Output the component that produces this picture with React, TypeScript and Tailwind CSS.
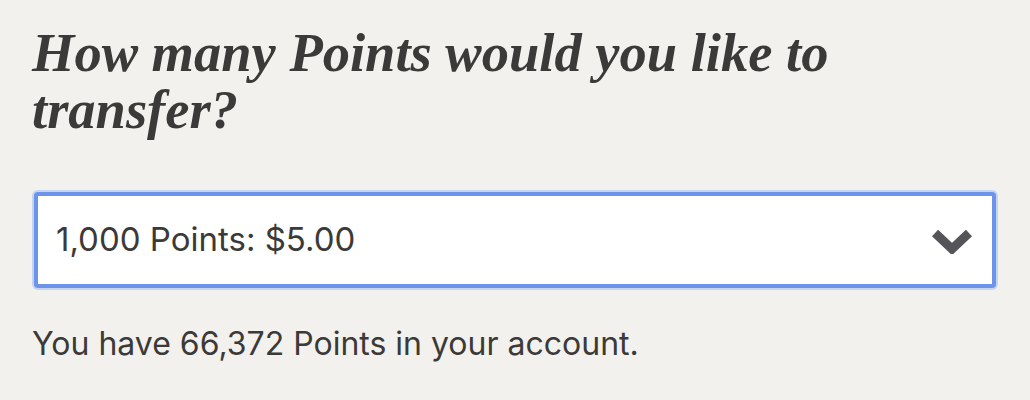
export default function App() {
  return (
    <div className="min-h-[400px] w-full bg-[#f3f1ed] px-[32px] pt-[24px] text-[#3b3a38]">
      <h1
        className="text-[54.5px] font-bold italic leading-[57px]"
        style={{ fontFamily: '"Liberation Serif", "DejaVu Serif", serif' }}
      >
        How many Points would you like to
        <br />
        transfer?
      </h1>
      <div className="mt-[52px] w-[966px] rounded-[6px] bg-[#c4d4f3] p-[2px]">
        <div className="flex h-[96px] items-center justify-between rounded-[4px] border-[4px] border-[#6d94e8] bg-white pl-[18px] pr-[20px]">
          <span
            className="text-[33px] text-[#3b3a38]"
            style={{ fontFamily: 'Inter, "Noto Sans", sans-serif' }}
          >
            1,000 Points: $5.00
          </span>
          <svg width="40" height="28" viewBox="0 0 40 28" className="text-[#555559]">
            <path d="M3 7 L20 23 L37 7" fill="none" stroke="currentColor" strokeWidth="9" strokeLinejoin="miter" />
          </svg>
        </div>
      </div>
      <p
        className="mt-[30px] text-[32px]"
        style={{ fontFamily: 'Inter, "Noto Sans", sans-serif' }}
      >
        You have 66,372 Points in your account.
      </p>
    </div>
  );
}
